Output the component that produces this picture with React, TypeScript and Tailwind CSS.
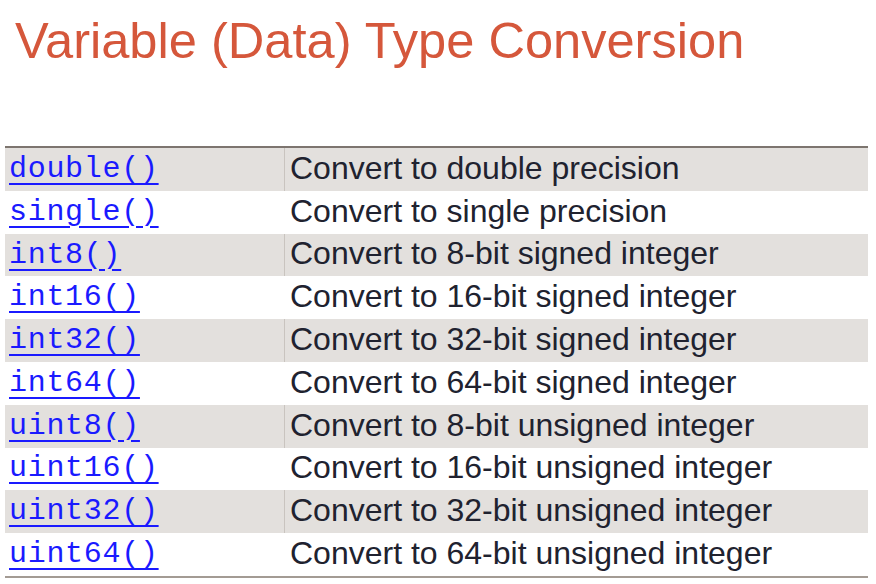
import React from "react";

const rows: [string, string][] = [
  ["double()", "Convert to double precision"],
  ["single()", "Convert to single precision"],
  ["int8()", "Convert to 8-bit signed integer"],
  ["int16()", "Convert to 16-bit signed integer"],
  ["int32()", "Convert to 32-bit signed integer"],
  ["int64()", "Convert to 64-bit signed integer"],
  ["uint8()", "Convert to 8-bit unsigned integer"],
  ["uint16()", "Convert to 16-bit unsigned integer"],
  ["uint32()", "Convert to 32-bit unsigned integer"],
  ["uint64()", "Convert to 64-bit unsigned integer"],
];

export default function App() {
  return (
    <div className="w-[876px] h-[584px] bg-white overflow-hidden" style={{ fontFamily: '"Liberation Sans", Arial, sans-serif' }}>
      <h1 className="pl-[15px] pt-[10px] text-[50.6px] leading-[62px] text-[#d5573b]">
        Variable (Data) Type Conversion
      </h1>
      <div className="mt-[74px] ml-[5px] w-[863px] border-t-2 border-b-2 border-t-[#7d756f] border-b-[#a39b94]">
        {rows.map(([fn, desc], i) => (
          <div key={fn} className={`flex h-[42.8px] items-center ${i % 2 === 0 ? "bg-[#e3e0dd]" : "bg-white"}`}>
            <div className={`w-[280px] h-full flex items-center pl-[4px] ${i % 2 === 0 ? "border-r border-[#c9c4bf]" : ""}`}>
              <a
                href="#"
                className="text-[#1a1aff] underline underline-offset-[6px] decoration-[2px] text-[30px] tracking-[0.7px]"
                style={{ fontFamily: '"Liberation Mono", "Courier New", monospace' }}
              >
                {fn}
              </a>
            </div>
            <div className="pl-[5px] text-[32px] leading-[36px] text-[#20222f] -mt-[3px]">{desc}</div>
          </div>
        ))}
      </div>
    </div>
  );
}
